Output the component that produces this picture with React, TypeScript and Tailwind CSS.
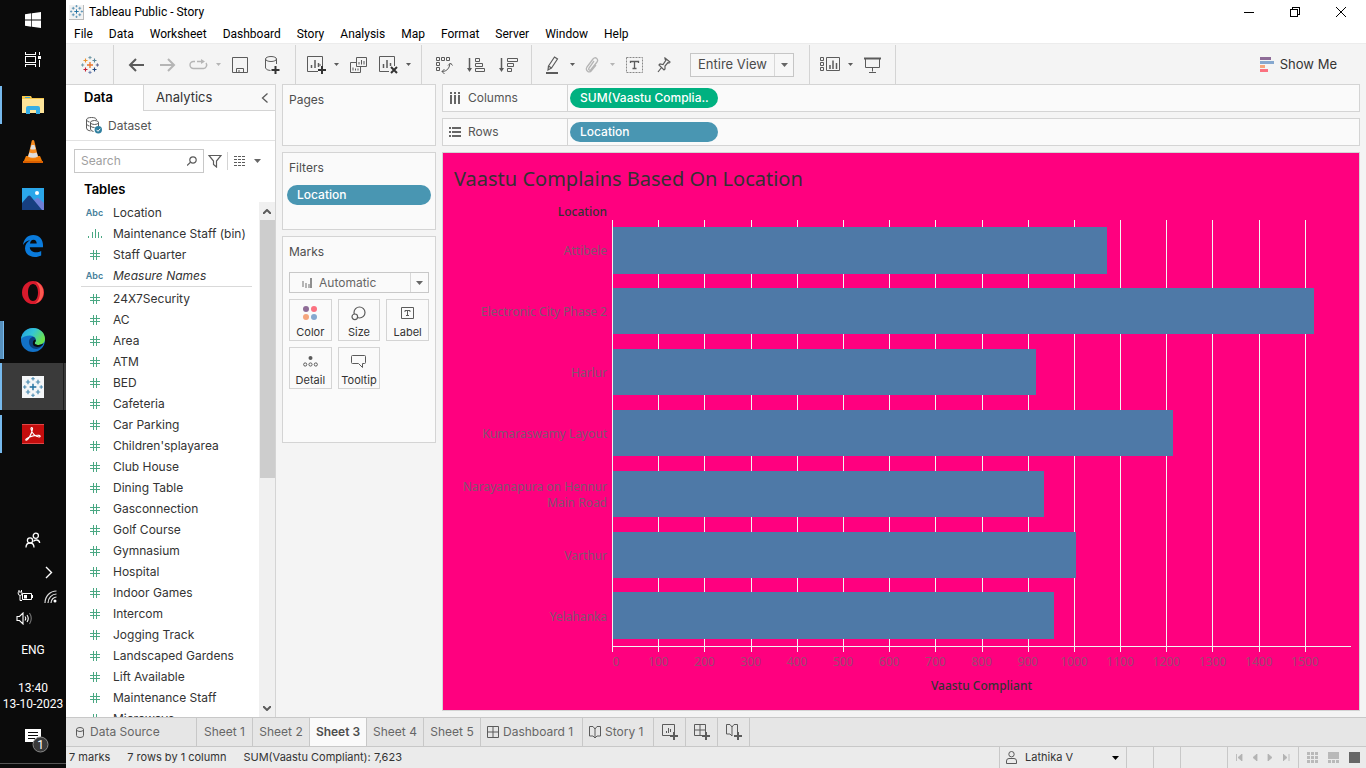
import React from "react";

const UI = "font-['Inter','Liberation_Sans',sans-serif]";
const SYS = "font-['Roboto','Noto_Sans',sans-serif]";

type IcoProps = {
  w: number;
  h: number;
  children: React.ReactNode;
  stroke?: string;
  sw?: number;
  crisp?: boolean;
};

function Ico({ w, h, children, stroke = "#5b5b5b", sw = 1, crisp }: IcoProps) {
  return (
    <svg
      width={w}
      height={h}
      viewBox={`0 0 ${w} ${h}`}
      fill="none"
      stroke={stroke}
      strokeWidth={sw}
      shapeRendering={crisp ? "crispEdges" : undefined}
      aria-hidden="true"
      className="shrink-0"
    >
      {children}
    </svg>
  );
}

function Caret({ color = "#666" }: { color?: string }) {
  return (
    <svg width="7" height="4" viewBox="0 0 7 4" aria-hidden="true" className="shrink-0">
      <path d="M0 0h7L3.5 4z" fill={color} />
    </svg>
  );
}

const MONO = ["#4a8ab0", "#4a8ab0", "#4a8ab0", "#4a8ab0", "#4a8ab0", "#4a8ab0", "#4a8ab0", "#4a8ab0", "#1f6f9f"];
const COLOR = ["#eb912c", "#59879b", "#c72035", "#1f447e", "#7199a6", "#7099a6", "#5b6591", "#6a7fb0", "#e8762d"];

function TableauMark({ size, colors }: { size: number; colors: string[] }) {
  const marks: [number, number, number, number][] = [
    [4.5, 4.5, 2, 1.1],
    [13.5, 4.5, 2, 1.1],
    [4.5, 13.5, 2, 1.1],
    [13.5, 13.5, 2, 1.1],
    [9, 1.6, 1.6, 1],
    [1.6, 9, 1.6, 1],
    [16.4, 9, 1.6, 1],
    [9, 16.4, 1.6, 1],
    [9, 9, 3, 1.3],
  ];
  return (
    <svg width={size} height={size} viewBox="0 0 18 18" fill="none" aria-hidden="true">
      {marks.map(([x, y, r, sw], i) => (
        <path key={i} d={`M${x - r} ${y}h${r * 2}M${x} ${y - r}v${r * 2}`} stroke={colors[i]} strokeWidth={sw} />
      ))}
    </svg>
  );
}

/* ---------- Windows taskbar ---------- */

function TaskButton({ label, state, children }: { label: string; state?: "open" | "multi" | "active"; children: React.ReactNode }) {
  return (
    <button aria-label={label} className={`flex h-[47px] w-full items-center ${state === "active" ? "bg-[#3a3a3a]" : ""}`}>
      <span
        className={`shrink-0 ${
          state === "active"
            ? "h-full w-[2px] bg-[#76b9ed]"
            : state === "multi"
              ? "h-[38px] w-[4px] border-r border-[#76b9ed] bg-[#5790bd]"
              : state === "open"
                ? "h-[38px] w-[2px] bg-[#76b9ed]"
                : "w-[2px]"
        }`}
      />
      <span className={`flex flex-1 justify-center ${state === "multi" ? "pr-1" : "pr-[2px]"}`}>{children}</span>
      {state === "active" && <span className="h-full w-[3px] border-l border-[#1d1d1d]" />}
    </button>
  );
}

function Taskbar() {
  return (
    <aside className={`flex w-[66px] shrink-0 flex-col bg-[#0b0b0b] text-xs text-white ${SYS}`}>
      <button aria-label="Start" className="flex h-10 items-center justify-center">
        <svg width="16" height="16" viewBox="0 0 16 16" fill="#fff" aria-hidden="true">
          <path d="M0 2.2 6.3 1.3v6.2H0zM7 1.2 16 0v7.5H7zM0 8.4h6.3v6.3L0 13.8zM7 8.4h9V16l-9-1.2z" />
        </svg>
      </button>
      <button aria-label="Task view" className="mb-[3px] flex h-[38px] items-center justify-center">
        <Ico w={17} h={15} stroke="#fff" crisp>
          <path d="M.5 0v2.500h10V0M.5 15v-2.500h10V15M.5 4.500h10v6H.5zM14.500 0v3M14.500 8v7" />
          <path d="M13 4h3v3h-3z" fill="#fff" stroke="none" />
        </Ico>
      </button>
      <TaskButton label="File Explorer" state="open">
        <svg width="22" height="18" viewBox="0 0 22 18" aria-hidden="true">
          <path d="M0 0h9l1 2h12v15H0z" fill="#f5c74b" />
          <path d="M0 3h22v14H0z" fill="#fde49a" />
          <path d="M3 1h5v1H3z" fill="#3fa7dc" />
          <path d="M4 18v-6q0-2 2-2h10q2 0 2 2v6h-4v-4H8v4z" fill="#36aee6" />
        </svg>
      </TaskButton>
      <TaskButton label="VLC">
        <svg width="20" height="23" viewBox="0 0 20 23" aria-hidden="true">
          <path d="M3 16h14l3 7H0z" fill="#f07b05" />
          <path d="M10 0q-1 0-1.300 1L5 17q5 3 10 0L11.300 1Q11 0 10 0z" fill="#f68b1f" />
          <path d="M8.500 5h3l1.200 4q-2.700 1-5.400 0zM6.300 12.500q3.700 1.500 7.400 0l1.300 4q-5 2.500-10 0z" fill="#dedede" />
          <path d="M0 21h20v2H0z" fill="#d95f00" />
        </svg>
      </TaskButton>
      <TaskButton label="Photos">
        <svg width="22" height="22" viewBox="0 0 22 22" aria-hidden="true">
          <path d="M0 0h22v22H0z" fill="#2ba7ea" />
          <path d="m9 14 6-4q1-.5 2 .5l5 4.500v7H9z" fill="#6f7fd6" />
          <path d="M0 15 6 8q1.200-1 2.400 0L20 22H0z" fill="#173f80" />
          <circle cx="15" cy="5" r="2" fill="#fff" />
        </svg>
      </TaskButton>
      <TaskButton label="Edge Legacy">
        <svg width="20" height="22" viewBox="0 0 20 22" aria-hidden="true">
          <path
            d="M0 10C.8 4 4.600 0 10.200 0 16.500 0 20 4.600 20 10v2.300H6.800c.2 3.400 3 5 6.200 5 2 0 3.800-.6 5.200-1.400v4.500c-1.600.9-3.800 1.500-6.400 1.500C5.800 21.900 2 18.200 2 13.200 2 9.700 4 6.700 7 5.200 4 5.600 1.700 7.300 0 10zm7-1.500h6.700c0-2.300-1.200-3.700-3.200-3.700S7.400 6.300 7 8.500z"
            fill="#0a7bdc"
          />
        </svg>
      </TaskButton>
      <TaskButton label="Opera">
        <svg width="22" height="23" viewBox="0 0 22 23" aria-hidden="true">
          <path
            fillRule="evenodd"
            d="M11 0a11 11.500 0 1 0 0 23 11 11.500 0 1 0 0-23zm0 3c2.900 0 5 3.500 5 8.500S13.900 20 11 20s-5-3.500-5-8.500S8.100 3 11 3z"
            fill="#d81a2c"
          />
          <path d="M13 .3A11 11.500 0 0 1 13 22.700C17 20 18 15 18 11.500S17 3 13 .3z" fill="#fb5a50" />
        </svg>
      </TaskButton>
      <TaskButton label="Microsoft Edge" state="multi">
        <svg width="24" height="24" viewBox="0 0 24 24" aria-hidden="true">
          <defs>
            <linearGradient id="edgeTop" x1="0" x2="1" y1="0" y2=".5">
              <stop offset="0" stopColor="#1f9de0" />
              <stop offset=".5" stopColor="#34c5d6" />
              <stop offset="1" stopColor="#6be34b" />
            </linearGradient>
          </defs>
          <circle cx="12" cy="12" r="12" fill="#1272c8" />
          <path d="M0 11C.8 4.600 5.800 0 12 0c7 0 12 5 12 10.800 0 4-3 6.200-6.200 6.200-3 0-4.600-1-3.800-2.600C15.800 11 13 7.500 9 7.500 5 7.500 1.500 9 0 11z" fill="url(#edgeTop)" />
          <path d="M8 14c0-3 2-5.500 5-5 2 1 2.300 3.700 1 5.300-1 1.700.8 2.700 3.800 2.700 1.700 0 3-.5 4.200-1.400C21 19 18 21 15.500 21 11 21 8 18 8 14z" fill="#0b3f7d" />
          <path d="M14 14.300c-1 1.700.8 2.700 3.800 2.700 1.700 0 3.400-.6 4.600-1.700l-.8 1.700c-4 3.500-11 2-9.600-3 .3-1.500 2-2.500 2.600-2 .3.800 0 1.700-.6 2.300z" fill="#0b0b0b" />
        </svg>
      </TaskButton>
      <TaskButton label="Tableau Public" state="active">
        <span className="ml-[3px] flex size-[22px] items-center justify-center bg-[#f4f6f8]">
          <TableauMark size={20} colors={MONO} />
        </span>
      </TaskButton>
      <TaskButton label="Acrobat Reader" state="open">
        <svg width="22" height="20" viewBox="0 0 22 20" aria-hidden="true">
          <path d="M0 0h22v20H0z" fill="#c40d0d" />
          <path d="M0 0h22v1H0zM0 19h22v1H0z" fill="#e04848" />
          <path
            d="M4 16.200c1.800.6 6-6.500 6.500-11.500.1-1.500-1.800-1.500-1.500.3.700 4.300 4.600 8.200 8.300 8 1.400-.2 1-1.600-.5-1.700C13 11 7 12.800 4.700 14.600c-.9.700-1.100 1.400-.7 1.600z"
            fill="none"
            stroke="#fff"
            strokeWidth="1.200"
          />
        </svg>
      </TaskButton>

      <div className="flex-1" />
      <button aria-label="People" className="flex h-8 items-center justify-center">
        <Ico w={16} h={16} stroke="#fff" sw={1.3}>
          <circle cx="5" cy="8.500" r="2.600" />
          <path d="M1 15.500c0-6 8-6 8 0M8.500 9.500c1-2 5.700-2.500 6.200 1.500" />
          <circle cx="10.800" cy="3.800" r="2.600" />
        </Ico>
      </button>
      <button aria-label="Show hidden icons" className="flex h-8 items-center justify-end pr-[13px]">
        <Ico w={8} h={13} stroke="#fff" sw={1.4}>
          <path d="m1 1 5.500 5.500L1 12" />
        </Ico>
      </button>
      <div className="flex h-4 items-center justify-between pl-[17px] pr-[9px]">
        <Ico w={16} h={12} stroke="#fff">
          <path d="M5.500 3.500h9v6h-9zM15.500 5v3M1 2h4M2 0v2M4.500 0v2M1 2.500q0 3 2.200 3T5 2.500M3 5.500v5h2" />
          <path d="M7 5h3v3.500H7z" fill="#fff" stroke="none" />
        </Ico>
        <Ico w={13} h={13} stroke="#ddd" sw={1.2}>
          <path d="M1 13C1 6.400 6 1 12.500 1M4 13c0-5 4-9 8.500-9M7 13c0-3.300 2.700-6 5.500-6" />
          <circle cx="11" cy="11" r="1.500" fill="#fff" stroke="none" />
        </Ico>
      </div>
      <button aria-label="Volume" className="mb-1 flex h-7 items-center pl-4">
        <Ico w={17} h={13} stroke="#fff" sw={1.1}>
          <path d="M1 4.500h2.500L7 1v11L3.500 8.500H1zM9 4.500q1.500 2 0 4M11 3q2.500 3.500 0 7" />
          <path d="M13.500 1q3.500 5.500 0 11" stroke="#777" />
        </Ico>
      </button>
      <button className="h-7">ENG</button>
      <button className="mt-4 flex flex-col items-center leading-4">
        <span>13:40</span>
        <span>13-10-2023</span>
      </button>
      <button aria-label="Notifications" className="mt-2 flex h-11 items-center justify-center border-b border-[#555] pl-2">
        <svg width="25" height="25" viewBox="0 0 25 25" aria-hidden="true">
          <path d="M0 0h16v13h-4v3l-4-3H0z" fill="#fff" />
          <path d="M3 3.500h10M3 6.500h10M3 9.500h7" stroke="#0b0b0b" />
          <circle cx="15.500" cy="15.500" r="7.500" fill="#3a3a3a" stroke="#888" />
          <text x="15.500" y="20" fontSize="12" fill="#fff" textAnchor="middle">1</text>
        </svg>
      </button>
      <div className="h-1" />
    </aside>
  );
}

/* ---------- Title, menus and toolbar ---------- */

function TitleBar() {
  return (
    <header className={`flex h-6 shrink-0 items-center bg-white pl-[3px] pr-[2px] text-xs text-black ${SYS}`}>
      <span className="flex size-[15px] items-center justify-center border-b border-r border-[#bbb] bg-[#f3f3f3]">
        <TableauMark size={13} colors={MONO} />
      </span>
      <h1 className="ml-[5px] flex-1">Tableau Public - Story</h1>
      <button aria-label="Minimize" className="flex w-[46px] justify-center">
        <Ico w={10} h={10} stroke="#000" crisp><path d="M0 5.500h10" /></Ico>
      </button>
      <button aria-label="Restore" className="flex w-[46px] justify-center">
        <Ico w={10} h={10} stroke="#000" crisp><path d="M.5 2.500h7v7h-7zM2.500 2V.5h7v7H8" /></Ico>
      </button>
      <button aria-label="Close" className="flex w-[46px] justify-center">
        <Ico w={10} h={10} stroke="#000"><path d="m0 0 10 10M10 0 0 10" /></Ico>
      </button>
    </header>
  );
}

const MENUS = ["File", "Data", "Worksheet", "Dashboard", "Story", "Analysis", "Map", "Format", "Server", "Window", "Help"];

function MenuBar() {
  return (
    <nav className={`flex h-[19px] shrink-0 items-center gap-4 bg-white px-2 text-xs text-black ${SYS}`}>
      {MENUS.map((m) => (
        <button key={m}>{m}</button>
      ))}
    </nav>
  );
}

function Tool({ label, slim, children }: { label: string; slim?: boolean; children: React.ReactNode }) {
  return (
    <button aria-label={label} className={`flex h-8 shrink-0 items-center justify-center ${slim ? "w-7" : "w-8"}`}>
      {children}
    </button>
  );
}

function Drop({ label, faded }: { label: string; faded?: boolean }) {
  return (
    <button aria-label={label} className="flex h-8 w-3 shrink-0 items-center justify-center">
      <svg width="5" height="3" viewBox="0 0 5 3" aria-hidden="true">
        <path d="M0 0h5L2.500 3z" fill={faded ? "#b5b5b5" : "#5b5b5b"} />
      </svg>
    </button>
  );
}

function Group({ children }: { children: React.ReactNode }) {
  return <div className="flex items-center border-r border-[#d4d4d4] pl-1.5 pr-[7px]">{children}</div>;
}

function Toolbar() {
  return (
    <div className="flex h-[41px] shrink-0 items-stretch border-t border-[#ececec] bg-[#f4f4f4] pt-px">
      <div className="flex w-12 items-center justify-center border-r border-[#d4d4d4]">
        <button aria-label="Start page"><TableauMark size={18} colors={COLOR} /></button>
      </div>
      <Group>
        <Tool label="Undo"><Ico w={16} h={14} sw={2}><path d="M16 7H2M8 1 2 7l6 6" /></Ico></Tool>
        <Tool label="Redo"><Ico w={16} h={14} sw={2} stroke="#b5b5b5"><path d="M0 7h14M8 1l6 6-6 6" /></Ico></Tool>
        <Tool label="Replay" slim>
          <Ico w={19} h={12} stroke="#b5b5b5" sw={1.4}>
            <path d="M6 2.500H4.500a3.500 3.500 0 0 0 0 7h10a3.500 3.500 0 0 0 2.500-5.500M8 2.500h5" />
            <path d="m12 0 4 2.500L12 5z" fill="#b5b5b5" stroke="none" />
          </Ico>
        </Tool>
        <Drop label="Replay options" faded />
        <Tool label="Save"><Ico w={16} h={16}><path d="M.5.5h15v15H.5zM4.500 15.500v-4h7v4M7 15v-2" /></Ico></Tool>
        <Tool label="New data source">
          <Ico w={15} h={18}>
            <ellipse cx="6" cy="3" rx="5.500" ry="2.500" />
            <path d="M.5 3v9q1 2.500 5 2.500M11.500 3v5" />
            <path d="M10.500 10v8M6.500 14h8" stroke="#333" strokeWidth="2" />
          </Ico>
        </Tool>
      </Group>
      <Group>
        <Tool label="New worksheet" slim>
          <Ico w={19} h={18}>
            <path d="M11 15.500H.5V.5h15V10M13 8v2" />
            <path d="M4.500 12V9M8 12V4M11.500 11V7" strokeWidth="1.500" />
            <path d="M15 10v8M11 14h8" stroke="#333" strokeWidth="2" />
          </Ico>
        </Tool>
        <Drop label="New worksheet options" />
        <Tool label="Duplicate">
          <Ico w={17} h={16}>
            <path d="M6.500.5h10v9h-10zM6 5.500H.5v10h10V10" />
            <path d="M9 7.500V5M11.500 7.500V3M14 7.500V4M3 13.500v-3M5.500 13.500v-2M8 13.500v-2" />
          </Ico>
        </Tool>
        <Tool label="Clear sheet" slim>
          <Ico w={19} h={18}>
            <path d="M10 15.500H.5V.5h15V10" />
            <path d="M4.500 12V8M8 12V4M11.500 10V7" strokeWidth="1.500" />
            <path d="m12 11 6 6M18 11l-6 6" stroke="#333" strokeWidth="2" />
          </Ico>
        </Tool>
        <Drop label="Clear options" />
      </Group>
      <Group>
        <Tool label="Swap rows and columns">
          <Ico w={18} h={18}>
            <path d="M1.500 1.500h3v3h-3zM6.500 1.500h3v3h-3zM11.500 1.500h3v3h-3zM1.500 6.500h3v3h-3zM1.500 11.500h3v3h-3zM7 15.500q7 0 8-8M13 9.500l2.500-2.500L17.500 9.500M9.500 13 7 15.500 9.500 18" />
          </Ico>
        </Tool>
        <Tool label="Sort ascending">
          <Ico w={19} h={16}>
            <path d="M2.500 1v12" strokeWidth="1.500" />
            <path d="M0 11h5l-2.500 4z" fill="#5b5b5b" stroke="none" />
            <path d="M8.500 1.500h4v3h-4zM8.500 6.500h7v3h-7zM8.500 11.500h9v3h-9z" />
          </Ico>
        </Tool>
        <Tool label="Sort descending">
          <Ico w={19} h={16}>
            <path d="M2.500 1v12" strokeWidth="1.500" />
            <path d="M0 11h5l-2.500 4z" fill="#5b5b5b" stroke="none" />
            <path d="M8.500 1.500h10v3h-10zM8.500 6.500h6v3h-6zM8.500 11.500h4v3h-4z" />
          </Ico>
        </Tool>
      </Group>
      <Group>
        <Tool label="Highlight" slim>
          <Ico w={13} h={18}>
            <path d="m2.500 10 6-9 3 2-6 9zM2.500 10l-.5 4 3.500-2" strokeWidth="1.200" />
            <path d="M0 17h12" strokeWidth="2" />
          </Ico>
        </Tool>
        <Drop label="Highlight options" />
        <Tool label="Group members" slim>
          <Ico w={14} h={16} stroke="#b5b5b5" sw={1.3}>
            <path d="m9 4-5 7c-1 2 1 3 2 1.500L12 5c2-3-2-6-4-3L2 10c-2 3 2 7 4.500 3.500L11 8" />
          </Ico>
        </Tool>
        <Drop label="Group options" faded />
        <Tool label="Show mark labels">
          <Ico w={17} h={16}>
            <path d="M.5.5h16v15H.5z" strokeDasharray="2 1" stroke="#888" />
            <path d="M4.500 6V4.500h8V6M8.500 4.500v7M6.500 11.500h4" strokeWidth="1.300" />
          </Ico>
        </Tool>
        <Tool label="Fix axes" slim>
          <Ico w={14} h={16} sw={1.200}>
            <path d="m8 1 5 4-1 1-1-.5L8 9v3l-1 1-5-5 1-1 3 .5L9 3 8 2zM4.500 10.500 1 15" />
          </Ico>
        </Tool>
        <div className="ml-3 mr-2 flex h-6 w-[104px] border border-[#c6c6c6] bg-[#f7f7f7]">
          <select aria-label="Fit" className={`min-w-0 flex-1 appearance-none pl-[7px] text-[13px] text-[#4b4b4b] ${UI}`}>
            <option>Entire View</option>
          </select>
          <span className="flex w-[19px] items-center justify-center border-l border-[#d8d8d8]"><Caret /></span>
        </div>
      </Group>
      <Group>
        <Tool label="Show cards" slim>
          <Ico w={20} h={15}>
            <path d="M.5.5h3v3h-3zM.5 5.500h3v3h-3zM.5 10.500h3v3h-3zM6.500.5h13v13h-13z" />
            <path d="M10 12V8M13 12V3.500M16.500 12V6" strokeWidth="1.500" />
          </Ico>
        </Tool>
        <Drop label="Card options" />
        <Tool label="Presentation mode">
          <Ico w={17} h={16}>
            <path d="M0 1.500h17" strokeWidth="2" />
            <path d="M1.500 2v8.500h14V2M8.500 10.500v4M5 15.500h7" />
          </Ico>
        </Tool>
      </Group>
      <button className={`ml-auto mr-[29px] flex items-center gap-1.5 text-[13px] text-[#333] ${UI}`}>
        <svg width="14" height="15" viewBox="0 0 14 15" aria-hidden="true">
          <path d="M0 0h11v3H0z" fill="#8e6c97" />
          <path d="M0 4h14v3H0z" fill="#86a8cf" />
          <path d="M0 8h5v3H0z" fill="#f5a57c" />
          <path d="M0 12h8v3H0z" fill="#fb7180" />
        </svg>
        Show Me
      </button>
    </div>
  );
}

/* ---------- Data pane ---------- */

type Kind = "abc" | "bin" | "num";
const DIMENSIONS: [Kind, string][] = [
  ["abc", "Location"],
  ["bin", "Maintenance Staff (bin)"],
  ["num", "Staff Quarter"],
  ["abc", "Measure Names"],
];
const MEASURES = [
  "24X7Security", "AC", "Area", "ATM", "BED", "Cafeteria", "Car Parking", "Children'splayarea", "Club House",
  "Dining Table", "Gasconnection", "Golf Course", "Gymnasium", "Hospital", "Indoor Games", "Intercom",
  "Jogging Track", "Landscaped Gardens", "Lift Available", "Maintenance Staff", "Microwave",
];

function Field({ kind, name }: { kind: Kind; name: string }) {
  return (
    <li className="h-[21px]">
      <button className="flex h-full items-center text-xs text-[#333]">
        <span className="flex w-[37px] justify-center">
          {kind === "abc" && <span className="text-[9px] font-semibold text-[#46809b]">Abc</span>}
          {kind === "bin" && (
            <Ico w={14} h={9} stroke="#4aa883" crisp>
              <path d="M.5 7v2M4.500 3v6M7.500 0v9M10.500 3v6M13.500 7v2" />
            </Ico>
          )}
          {kind === "num" && (
            <Ico w={10} h={10} stroke="#4aa883">
              <path d="M0 3.500h10M0 6.500h10M3.500 0v10M6.500 0v10" />
            </Ico>
          )}
        </span>
        <span className={name === "Measure Names" ? "italic" : ""}>{name}</span>
      </button>
    </li>
  );
}

function DataPane() {
  return (
    <section className="flex w-[210px] shrink-0 flex-col border-r border-t border-[#d4d4d4] bg-white">
      <div className="flex h-[26px] shrink-0 text-[13px] text-[#333]">
        <button className="w-[77px] pr-3 font-semibold text-black">Data</button>
        <button className="flex flex-1 items-center justify-between border-b border-l border-[#d4d4d4] bg-[#f9f9f9] pl-3 pr-1.5">
          Analytics
          <Ico w={8} h={10} sw={1.3}><path d="M6.500.5 1.500 5l5 4.500" /></Ico>
        </button>
      </div>
      <button className="flex h-[30px] shrink-0 items-center gap-1.5 border-b border-[#e2e2e2] pl-5 text-xs text-[#555]">
        <Ico w={16} h={17}>
          <path d="M4.500 14Q.5 13.500.5 11V3q0-2.500 5-2.500T10.500 3M.5 3q1 2 3 2M.5 7q1 2 3 2" />
          <ellipse cx="8.500" cy="5.500" rx="4" ry="2" />
          <path d="M4.500 5.500V12q0 2 3 2.500M12.500 5.500V9M4.500 9q1 1.500 4 1.500" />
          <circle cx="12.300" cy="12.800" r="3.700" fill="#2f7f9f" stroke="none" />
          <path d="m10.500 12.800 1.500 1.500 2.300-2.600" stroke="#fff" />
        </Ico>
        Dataset
      </button>
      <div className="flex shrink-0 items-center pl-2 pt-2">
        <label className="flex h-6 w-[130px] items-center border border-[#c8c8c8] px-1.5">
          <input type="search" aria-label="Search fields" placeholder="Search" className="min-w-0 flex-1 text-xs outline-none placeholder:text-[#a0a0a0]" />
          <Ico w={10} h={10} sw={1.2}>
            <circle cx="6" cy="4" r="3.200" />
            <path d="M3.500 6.300 0 9.500" />
          </Ico>
        </label>
        <button aria-label="Filter fields" className="ml-1">
          <Ico w={14} h={14}><path d="M1 1.500h12L8.500 7v6L5.500 10.500V7z" strokeWidth="1.200" /></Ico>
        </button>
        <span className="mx-[5px] h-[18px] w-px bg-[#d4d4d4]" />
        <button aria-label="View options" className="flex items-center gap-2">
          <Ico w={13} h={10} crisp>
            <path d="M1 .5h12M1 3.500h12M1 6.500h12M1 9.500h12" strokeDasharray="3 1" strokeWidth="1" />
          </Ico>
          <Caret />
        </button>
      </div>
      <h2 className="shrink-0 pl-[18px] pt-1.5 text-[13px] font-semibold leading-5 text-black">Tables</h2>
      <div className="flex min-h-0 flex-1 pt-[3px]">
        <div className="min-w-0 flex-1 overflow-hidden pl-[10px]">
          <ul>
            {DIMENSIONS.map(([k, n]) => <Field key={n} kind={k} name={n} />)}
          </ul>
          <hr className="ml-[5px] mr-[7px] border-[#d9d9d9]" />
          <ul className="pt-px">
            {MEASURES.map((n) => <Field key={n} kind="num" name={n} />)}
          </ul>
        </div>
        <div className="flex w-4 shrink-0 flex-col items-center bg-[#f0f0f0]">
          <button aria-label="Scroll up" className="flex h-[18px] items-center">
            <Ico w={8} h={5} sw={2}><path d="m0 5 4-4 4 4" /></Ico>
          </button>
          <div className="h-1/2 w-[15px] bg-[#cdcdcd]" />
          <button aria-label="Scroll down" className="mt-auto flex h-[18px] items-center">
            <Ico w={8} h={5} sw={2}><path d="m0 0 4 4 4-4" /></Ico>
          </button>
        </div>
      </div>
    </section>
  );
}

/* ---------- Cards ---------- */

function Pill({ children, className }: { children: React.ReactNode; className: string }) {
  return (
    <button className={`flex h-5 items-center whitespace-nowrap rounded-full px-2.5 text-xs font-medium text-white ${className}`}>
      {children}
    </button>
  );
}

function Mark({ label, children }: { label: string; children: React.ReactNode }) {
  return (
    <button className="flex h-[42px] flex-col items-center border border-[#d4d4d4] text-[11px] text-[#333]">
      <span className="flex h-[26px] items-center justify-center">{children}</span>
      <span className="-mt-px leading-[14px]">{label}</span>
    </button>
  );
}

function Cards() {
  const card = "border border-[#d4d4d4] bg-[#fafafa] pt-1.5 text-xs leading-[18px] text-[#4e4e4e]";
  return (
    <section className="ml-1.5 flex w-[154px] shrink-0 flex-col gap-1.5">
      <div className={`h-[62px] pl-1.5 ${card}`}>Pages</div>
      <div className={`h-[78px] px-1 ${card}`}>
        <h3 className="px-0.5">Filters</h3>
        <Pill className="mt-2 w-full bg-[#4996b2]">Location</Pill>
      </div>
      <div className={`h-[207px] px-1.5 ${card}`}>
        <h3>Marks</h3>
        <div className="mt-[11px] flex h-[21px] items-center border border-[#c8c8c8] pl-3">
          <Ico w={10} h={10} stroke="#b5b5b5" sw={2} crisp>
            <path d="M1 9V3M4 10V5M7 10V6" />
            <path d="M9 10V0" stroke="#8f8f8f" />
          </Ico>
          <select aria-label="Mark type" className="min-w-0 flex-1 appearance-none pl-[7px] text-xs text-[#666]">
            <option>Automatic</option>
          </select>
          <span className="flex h-full w-[18px] items-center justify-center border-l border-[#d8d8d8]"><Caret /></span>
        </div>
        <div className="mt-1.5 grid grid-cols-3 gap-1.5">
          <Mark label="Color">
            <svg width="14" height="14" viewBox="0 0 14 14" aria-hidden="true">
              <circle cx="3" cy="3" r="3" fill="#8e6c97" />
              <circle cx="11" cy="3" r="3" fill="#fb7180" />
              <circle cx="3" cy="11" r="3" fill="#f5a57c" />
              <circle cx="11" cy="11" r="3" fill="#86a8cf" />
            </svg>
          </Mark>
          <Mark label="Size">
            <Ico w={15} h={15} sw={1.2}>
              <circle cx="8.500" cy="6.500" r="5.500" />
              <circle cx="3.800" cy="10.800" r="2.800" fill="#fafafa" />
            </Ico>
          </Mark>
          <Mark label="Label">
            <Ico w={13} h={12}>
              <path d="M.5.5h12v11H.5zM4 5V3.500h5V5M6.500 3.500v5M5 8.500h3" />
            </Ico>
          </Mark>
          <Mark label="Detail">
            <Ico w={15} h={11}>
              <circle cx="7.500" cy="2" r="2" fill="#5b5b5b" stroke="none" />
              <circle cx="2.200" cy="8.500" r="1.600" />
              <circle cx="7.500" cy="8.500" r="1.600" />
              <circle cx="12.800" cy="8.500" r="1.600" />
            </Ico>
          </Mark>
          <Mark label="Tooltip">
            <Ico w={15} h={13}>
              <path d="M1.500.5h12q1 0 1 1v6q0 1-1 1h-2v4l-4-4h-6q-1 0-1-1v-6q0-1 1-1z" />
            </Ico>
          </Mark>
        </div>
      </div>
    </section>
  );
}

/* ---------- Shelves and chart ---------- */

function Shelf({ label, icon, children }: { label: string; icon: React.ReactNode; children: React.ReactNode }) {
  return (
    <div className="flex h-7 shrink-0 items-stretch border border-[#d4d4d4] bg-[#fafafa] text-xs text-[#555]">
      <div className="flex w-[125px] items-center gap-[7px] border-r border-[#d4d4d4] pl-1.5">
        {icon}
        {label}
      </div>
      <div className="flex items-center pl-[2px]">{children}</div>
    </div>
  );
}

const MAX = 1600;
const TICKS = Array.from({ length: 16 }, (_, i) => i * 100);
const DATA: [string, number][] = [
  ["Attibele", 1070],
  ["Electronic City Phase 2", 1520],
  ["Harlur", 918],
  ["Kumaraswamy Layout", 1215],
  ["Narayanapura on Hennur Main Road", 935],
  ["Varthur", 1004],
  ["Yelahanka", 957],
];

function Chart() {
  return (
    <figure className="flex min-h-0 flex-1 flex-col border border-[#d4d4d4] bg-[#ff007f] pr-2 font-['Noto_Sans','Open_Sans',sans-serif] text-xs leading-4">
      <figcaption className="pb-3 pl-[11px] pt-3 text-xl leading-[27px] text-[#333]">
        Vaastu Complains Based On Location
      </figcaption>
      <div className="grid min-h-0 flex-1 grid-cols-[169px_1fr] grid-rows-[16px_1fr_5px_auto_auto] pb-4">
        <div className="pr-[5px] text-right font-medium text-[#333]">Location</div>
        <div className="col-start-1 row-start-2 flex flex-col">
          {DATA.map(([name]) => (
            <div key={name} className="flex flex-1 items-center justify-end pr-[5px] text-right text-[#80566f]">
              <span className="max-w-[150px]">{name}</span>
            </div>
          ))}
        </div>
        <div className="col-start-2 row-span-2 row-start-2 flex">
          {TICKS.map((t) => (
            <div key={t} className="flex-1 border-l border-[#f3f3f3]" />
          ))}
        </div>
        <div className="col-start-2 row-start-2 flex flex-col border-b border-[#f3f3f3] pl-px">
          {DATA.map(([name, v]) => (
            <div key={name} className="flex flex-1 items-center">
              <div className="h-[76%] bg-[#4e79a7]" style={{ width: `${(v / MAX) * 100}%` }} />
            </div>
          ))}
        </div>
        <div className="col-start-2 row-start-4 -ml-[3.125%] mr-[3.125%] flex pt-[2px] text-[#9a4a72]">
          {TICKS.map((t) => (
            <div key={t} className="flex-1 text-center">
              <span className={t === 0 ? "pl-2" : ""}>{t}</span>
            </div>
          ))}
        </div>
        <div className="col-start-2 row-start-5 pt-2 text-center font-medium text-[#333]">Vaastu Compliant</div>
      </div>
    </figure>
  );
}

/* ---------- Sheet tabs and status bar ---------- */

const PLUS = <path d="M12 8v8M8 12h8" strokeWidth="2" />;

function SheetTabs() {
  const tab = "flex shrink-0 items-center border-r border-[#c8c8c8]";
  return (
    <nav className="flex h-[30px] shrink-0 border-y border-[#c8c8c8] bg-[#e6e6e6] text-xs text-[#666]">
      <button className={`w-[131px] gap-1.5 pl-2.5 ${tab}`}>
        <Ico w={8} h={11}>
          <path d="M.5 2.500v6q0 2 3.500 2t3.500-2v-6" />
          <ellipse cx="4" cy="2.500" rx="3.500" ry="2" />
        </Ico>
        Data Source
      </button>
      {[1, 2, 3, 4, 5].map((n) => (
        <button
          key={n}
          className={`justify-center ${tab} ${n === 1 ? "w-14" : "w-[57px]"} ${n === 3 ? "bg-[#fafafa] font-semibold text-[#4e4e4e]" : ""}`}
        >
          Sheet {n}
        </button>
      ))}
      <button className={`w-[102px] gap-1 pl-1.5 ${tab}`}>
        <Ico w={12} h={12}><path d="M.5.5h11v11H.5zM6 .5v11M.5 6h11" /></Ico>
        Dashboard 1
      </button>
      <button className={`w-[71px] gap-1 pl-1.5 ${tab}`}>
        <Ico w={12} h={13}><path d="M6 3v9M6 3 4 .5H.5v9.500H4L6 12l2-2h3.500V.5H8z" /></Ico>
        Story 1
      </button>
      <button aria-label="New worksheet" className={`w-8 justify-center ${tab}`}>
        <Ico w={16} h={16}><path d="M8 11.500H.5V.5h12V8M4.500 9V7M6.500 9V4M8.500 8V5" />{PLUS}</Ico>
      </button>
      <button aria-label="New dashboard" className={`w-8 justify-center ${tab}`}>
        <Ico w={16} h={16}><path d="M8 11.500H.5V.5h11V8M6 .5v11M.5 6h11" />{PLUS}</Ico>
      </button>
      <button aria-label="New story" className={`w-8 justify-center ${tab}`}>
        <Ico w={16} h={16}><path d="M6 3v9M6 3 4 .5H.5v9.500H4L6 12M11.500 8V.5H8L6 3" />{PLUS}</Ico>
      </button>
    </nav>
  );
}

function StatusBar() {
  const cell = "flex shrink-0 items-center border-l border-[#c8c8c8]";
  return (
    <footer className="flex h-[21px] shrink-0 bg-[#ebebeb] text-[11px] text-[#333]">
      <div className="flex flex-1 items-center gap-[17px] pl-[3px]">
        <span>7 marks</span>
        <span>7 rows by 1 column</span>
        <span>SUM(Vaastu Compliant): 7,623</span>
      </div>
      <button className={`w-[127px] pl-1.5 pr-[7px] ${cell}`}>
        <Ico w={11} h={13}>
          <circle cx="5.500" cy="3.200" r="2.700" />
          <path d="M.5 12.500V10q0-2.500 2.500-2.500h5q2.500 0 2.500 2.500v2.500z" />
        </Ico>
        <span className="ml-2 flex-1 text-left">Lathika V</span>
        <Caret color="#000" />
      </button>
      <div className={`w-[27px] ${cell}`} />
      <div className={`w-[27px] ${cell}`} />
      <div className={`w-[47px] ${cell}`} />
      <div className={`w-[71px] justify-between pl-2 pr-2 ${cell}`}>
        {[
          ["First", "M.5 0v7M6 0v7L2 3.500z"],
          ["Previous", "M5 0v7L1 3.500z"],
          ["Next", "M1 0v7l4-3.500z"],
          ["Last", "M0 0v7l4-3.500zM6 0v7"],
        ].map(([n, d]) => (
          <button key={n} aria-label={n}>
            <svg width="7" height="7" viewBox="0 0 7 7" fill="#b3b3b3" stroke="#b3b3b3" strokeWidth=".8" aria-hidden="true">
              <path d={d} />
            </svg>
          </button>
        ))}
      </div>
      <div className={`w-[68px] justify-between pl-2 pr-1.5 ${cell}`}>
        <button aria-label="Sheet sorter">
          <svg width="11" height="11" viewBox="0 0 11 11" fill="#b9b9b9" aria-hidden="true">
            <path d="M0 0h3v3H0zM4 0h3v3H4zM8 0h3v3H8zM0 4h3v3H0zM4 4h3v3H4zM8 4h3v3H8zM0 8h3v3H0zM4 8h3v3H4zM8 8h3v3H8z" />
          </svg>
        </button>
        <button aria-label="Filmstrip">
          <svg width="11" height="11" viewBox="0 0 11 11" fill="#b9b9b9" aria-hidden="true">
            <path d="M0 0h11v7H0zM0 8h3v3H0zM4 8h3v3H4zM8 8h3v3H8z" />
          </svg>
        </button>
        <button aria-label="Tabs" className="size-[11px] bg-[#666]" />
      </div>
    </footer>
  );
}

export default function App() {
  return (
    <div className="flex h-screen overflow-hidden">
      <Taskbar />
      <div className={`flex min-w-0 flex-1 flex-col bg-[#f4f4f4] ${UI}`}>
        <TitleBar />
        <MenuBar />
        <Toolbar />
        <main className="flex min-h-0 flex-1">
          <DataPane />
          <Cards />
          <section className="mx-1.5 mb-1.5 flex min-w-0 flex-1 flex-col gap-1.5">
            <Shelf
              label="Columns"
              icon={<Ico w={12} h={12} sw={2} stroke="#666"><path d="M2 0v2M6 0v2M10 0v2M2 3v9M6 3v9M10 3v9" /></Ico>}
            >
              <Pill className="w-[148px] bg-[#00b180]">SUM(Vaastu Complia..</Pill>
            </Shelf>
            <Shelf
              label="Rows"
              icon={<Ico w={12} h={12} sw={2} stroke="#666"><path d="M0 2h2M0 6h2M0 10h2M3 2h9M3 6h9M3 10h9" /></Ico>}
            >
              <Pill className="w-[148px] bg-[#4996b2]">Location</Pill>
            </Shelf>
            <Chart />
          </section>
        </main>
        <SheetTabs />
        <StatusBar />
      </div>
    </div>
  );
}
